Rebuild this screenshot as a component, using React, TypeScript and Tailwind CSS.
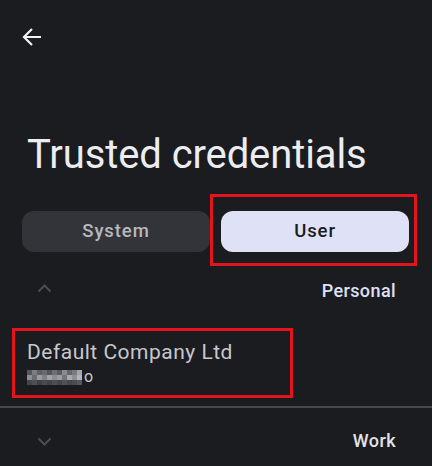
import React from 'react';

const mosaic = [
  // [x, y, shade] cells of 5px
  [0, 0, '#55565c'], [5, 0, '#7c7d83'], [10, 0, '#5f6066'], [15, 0, '#6a6b71'], [20, 0, '#54555b'], [25, 0, '#6e6f75'], [30, 0, '#5a5b61'], [35, 0, '#8a8b91'], [40, 0, '#65666c'], [45, 0, '#7a7b81'], [50, 0, '#a3a4aa'],
  [0, 5, '#8d8e94'], [5, 5, '#6b6c72'], [10, 5, '#9a9ba1'], [15, 5, '#7f8086'], [20, 5, '#a1a2a8'], [25, 5, '#8b8c92'], [30, 5, '#9d9ea4'], [35, 5, '#74757b'], [40, 5, '#a8a9af'], [45, 5, '#8f9096'], [50, 5, '#b3b4ba'],
  [0, 10, '#45464c'], [5, 10, '#4d4e54'], [10, 10, '#3f4046'], [15, 10, '#4a4b51'], [20, 10, '#424349'], [25, 10, '#4e4f55'], [30, 10, '#44454b'], [35, 10, '#505157'], [40, 10, '#46474d'], [45, 10, '#4b4c52'], [50, 10, '#56575d'],
];

const ChevronUp = () => (
  <svg width="15" height="9" viewBox="0 0 15 9" fill="none">
    <polyline points="1.5,7.5 7.5,1.5 13.5,7.5" stroke="#4b4c52" strokeWidth="2" />
  </svg>
);

const ChevronDown = () => (
  <svg width="15" height="9" viewBox="0 0 15 9" fill="none">
    <polyline points="1.5,1.5 7.5,7.5 13.5,1.5" stroke="#4b4c52" strokeWidth="2" />
  </svg>
);

export default function App() {
  return (
    <div className="w-[432px] h-[466px] overflow-hidden bg-[#1b1c20] flex flex-col font-['Roboto',_sans-serif]">
      {/* Header */}
      <div className="pt-[27px] pl-[22px]">
        <svg width="20" height="20" viewBox="0 0 20 20" fill="none">
          <path d="M19 10H2.5M10 2L2 10l8 8" stroke="#f1f2f6" strokeWidth="2.2" />
        </svg>
      </div>

      <h1 className="mt-[85px] pl-[27px] text-[40px] leading-[46px] text-[#ecedf1] font-normal tracking-[-0.1px]">
        Trusted credentials
      </h1>

      {/* Tabs */}
      <div className="mt-[33px] flex gap-[11px] pl-[22px] pr-[23px]">
        <button className="flex-1 h-[41px] rounded-[12px] bg-[#333439] text-[#b7b8bd] text-[18.5px] tracking-[0.9px] font-medium">
          System
        </button>
        <div className="relative flex-1">
          <button className="w-full h-[41px] rounded-[12px] bg-[#dfe1f6] text-[#1b1c20] text-[18.5px] tracking-[0.9px] font-medium">
            User
          </button>
          <div className="absolute -left-[11px] -top-[17px] -right-[8px] -bottom-[14px] border-[3px] border-[#e4141c] pointer-events-none" />
        </div>
      </div>

      {/* Personal */}
      <div className="mt-[18px] h-[40px] flex items-center justify-between pl-[37px] pr-[36px]">
        <div className="-mt-[4px]">
          <ChevronUp />
        </div>
        <span className="text-[18px] tracking-[0.4px] font-medium text-[#dfe1f5]">Personal</span>
      </div>

      {/* Certificate */}
      <div className="relative ml-[12px] mt-[18px] w-[281px] h-[70px] pl-[15px] pt-[10px]">
        <div className="text-[21px] leading-[28px] tracking-[0.5px] text-[#c7c8cd]">Default Company Ltd</div>
        <div className="flex items-center h-[20px]">
          <svg width="55" height="15" viewBox="0 0 55 15" className="mt-[3px]">
            {mosaic.map(([x, y, c], i) => (
              <rect key={i} x={x as number} y={y as number} width="5" height="5" fill={c as string} />
            ))}
          </svg>
          <span className="text-[16px] leading-[20px] text-[#c7c8cd] mt-[2px] ml-[2px]">o</span>
        </div>
        <div className="absolute inset-0 border-[3px] border-[#e4141c] pointer-events-none" />
      </div>

      <div className="mt-[8px] h-[2px] bg-[#48474d]" />

      {/* Work */}
      <div className="mt-[10px] h-[44px] flex items-center justify-between pl-[37px] pr-[36px]">
        <div className="mt-[2px]">
          <ChevronDown />
        </div>
        <span className="text-[18px] tracking-[0.4px] font-medium text-[#e3e3e8]">Work</span>
      </div>
    </div>
  );
}
